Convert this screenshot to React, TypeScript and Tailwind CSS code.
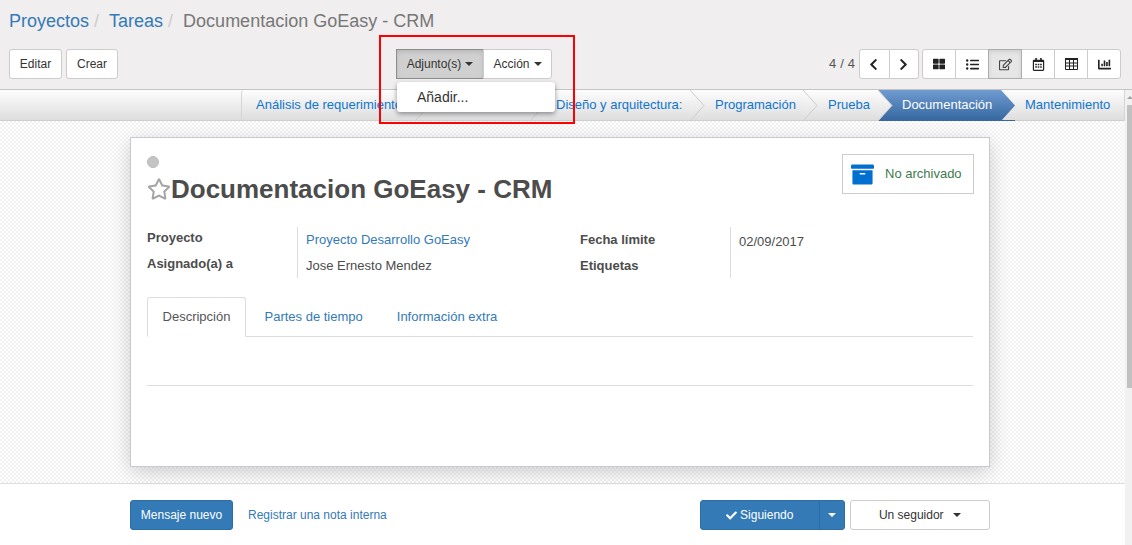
import { FaArchive, FaCheck, FaChevronLeft, FaChevronRight, FaRegCalendarAlt, FaChartBar, FaRegEdit, FaRegStar, FaThLarge, FaListUl } from "react-icons/fa";

function Caret({ className = "" }: { className?: string }) {
  return <span className={`inline-block w-0 h-0 border-x-4 border-x-transparent border-t-4 ${className}`} />;
}

function Arrow({ active }: { active?: boolean }) {
  const id = active ? "arrow-blue" : "arrow-grey";
  return (
    <svg className="absolute left-full top-0 z-10" width="15" height="31" viewBox="0 0 15 31">
      <defs>
        <linearGradient id={id} x1="0" y1="0" x2="0" y2="1">
          <stop offset="0" stopColor={active ? "#6f9bd0" : "#fdfdfd"} />
          <stop offset="1" stopColor={active ? "#35679f" : "#dedede"} />
        </linearGradient>
      </defs>
      <path d="M0 0 L14 15.5 L0 31 Z" fill={`url(#${id})`} />
      {!active && <path d="M0 0 L14 15.5 L0 31" fill="none" stroke="#cccccc" />}
      {active && <path d="M0 30.5 H14" stroke="#35679f" />}
    </svg>
  );
}

// fa-table from the older icon set: outlined grid, heavier top
function GridIcon() {
  return (
    <svg width="13" height="12" viewBox="0 0 13 12" fill="none" stroke="currentColor">
      <path d="M0.5 2 V11.5 H12.5 V2" />
      <path d="M0 1 H13" strokeWidth="2" />
      <path d="M0.5 5 H12.5 M0.5 8 H12.5 M4.5 2 V11.5 M8.5 2 V11.5" />
    </svg>
  );
}

const steps = [
  { label: "Análisis de requerimientos:", w: "w-[174px]", pl: "pl-[14px]" },
  { label: "", w: "w-[115px]", pl: "pl-[25px]" },
  { label: "Diseño y arquitectura:", w: "w-[160px]", pl: "pl-[26px]" },
  { label: "Programación", w: "w-[113px]", pl: "pl-[25px]" },
  { label: "Prueba", w: "w-[75px]", pl: "pl-[25px]" },
];

function ViewButton({ children, active, last }: { children: React.ReactNode; active?: boolean; last?: boolean }) {
  return (
    <div className={`w-[34px] h-[30px] flex items-center justify-center border -ml-px first:ml-0 first:rounded-l-[3px] ${last ? "rounded-r-[3px]" : ""} ${active ? "bg-[#e6e6e6] border-[#adadad] text-[#444] shadow-[inset_0_2px_4px_rgba(0,0,0,0.1)] z-[1]" : "bg-white border-[#cccccc] text-[#222]"}`}>
      {children}
    </div>
  );
}

export default function App() {
  return (
    <div className="relative w-[1132px] h-[545px] overflow-hidden bg-white text-[13px] text-[#4c4c4c] font-['Liberation_Sans',Arial,sans-serif]">
      {/* control panel */}
      <div className="h-[90px] bg-[#f0eeee] border-b border-[#c4c4c4]">
        <div className="h-[49px] pl-[9px] pt-[9px] text-[18px] leading-[25px] flex">
          <span className="text-[#337ab7]">Proyectos</span>
          <span className="text-[#ccc] pl-[5px] pr-[7px]">/</span>
          <span className="ml-[3px] text-[#337ab7]">Tareas</span>
          <span className="text-[#ccc] pl-[5px] pr-[7px]">/</span>
          <span className="ml-[3px] text-[#777]">Documentacion GoEasy - CRM</span>
        </div>
        <div className="flex items-center h-[30px] text-[12px] text-[#333]">
          <button className="ml-[9px] w-[53px] h-[30px] bg-white border border-[#ccc] rounded-[3px]">Editar</button>
          <button className="ml-[4px] w-[52px] h-[30px] bg-white border border-[#ccc] rounded-[3px]">Crear</button>
          <button className="ml-[278px] w-[88px] h-[30px] bg-[#d0d0d0] border border-[#8c8c8c] flex items-center justify-center gap-[4px] shadow-[inset_0_2px_4px_rgba(0,0,0,0.12)]">
            Adjunto(s) <Caret className="border-t-[#333]" />
          </button>
          <button className="w-[69px] h-[30px] -ml-px bg-white border border-[#ccc] rounded-r-[3px] flex items-center justify-center gap-[4px]">
            Acción <Caret className="border-t-[#333]" />
          </button>
          <span className="ml-[277px] w-[30px] text-[13px] tracking-[0.2px] text-[#555]">4 / 4</span>
          <div className="flex">
            <div className="w-[31px] h-[30px] flex items-center justify-center pr-[2px] bg-white border border-[#ccc] rounded-l-[3px] text-[#222]"><FaChevronLeft size={13} /></div>
            <div className="w-[30px] h-[30px] -ml-px flex items-center justify-center pr-[2px] bg-white border border-[#ccc] rounded-r-[3px] text-[#222]"><FaChevronRight size={13} /></div>
          </div>
          <div className="flex ml-[3px]">
            <ViewButton><FaThLarge size={12} /></ViewButton>
            <ViewButton><FaListUl size={13} /></ViewButton>
            <ViewButton active><FaRegEdit size={13} /></ViewButton>
            <ViewButton><FaRegCalendarAlt size={13} /></ViewButton>
            <ViewButton><GridIcon /></ViewButton>
            <ViewButton last><FaChartBar size={13} /></ViewButton>
          </div>
        </div>
      </div>

      <div className="flex h-[455px]">
        <div className="w-[1125px] flex flex-col">
          {/* status bar */}
          <div className="h-[31px] flex pl-[241px] bg-gradient-to-b from-[#fdfdfd] to-[#dedede] border-b border-[#cfcfcf] text-[#0f75ce]">
            {steps.map((s, i) => (
              <div key={i} className={`relative h-[31px] ${s.w} ${s.pl} leading-[29px] whitespace-nowrap ${i === 0 ? "border-l border-[#d5d5d5] rounded-l-[3px]" : ""}`}>
                {s.label}
                <Arrow />
              </div>
            ))}
            <div className="relative h-[31px] w-[123px] pl-[24px] leading-[29px] text-white bg-gradient-to-b from-[#6f9bd0] to-[#35679f]">
              Documentación
              <Arrow active />
            </div>
            <div className="h-[31px] w-[124px] pl-[24px] leading-[29px] border-r border-[#d5d5d5]">Mantenimiento</div>
          </div>

          {/* sheet area */}
          <div className="h-[363px] pt-[16px] pl-[130px] border-b border-[#dddddd] bg-[repeating-conic-gradient(#f2f2f2_0_25%,#ffffff_0_50%)] bg-[length:4px_4px]">
            <div className="w-[860px] h-[330px] bg-white border border-[#c8c8d3] shadow-[0_5px_20px_-1px_rgba(0,0,0,0.2)] pl-[16px] pr-[15px] pt-[16px]">
              <div className="flex justify-between">
                <div>
                  <div className="w-[12px] h-[12px] mt-[2px] rounded-full bg-[#c4c4c4] border border-[#bbb]" />
                  <div className="flex items-center mt-[6px] h-[30px]">
                    <FaRegStar size={24} className="text-[#a5a5a5]" />
                    <span className="text-[26px] leading-[30px] font-bold text-[#4c4c4c]">Documentacion GoEasy - CRM</span>
                  </div>
                </div>
                <div className="w-[132px] h-[40px] border border-[#cccccc] flex items-center pl-[8px] text-[#3e7a4e]">
                  <FaArchive size={23} className="text-[#0070d0]" />
                  <span className="ml-[11px]">No archivado</span>
                </div>
              </div>

              <div className="flex mt-[23px] h-[51px]">
                <div className="w-[150px] pt-[3px] font-bold leading-[15px]">
                  <div>Proyecto</div>
                  <div className="mt-[11px]">Asignado(a) a</div>
                </div>
                <div className="w-[283px] border-l border-[#dddddd] pl-[8px] pt-[5px] leading-[15px]">
                  <div className="text-[#337ab7]">Proyecto Desarrollo GoEasy</div>
                  <div className="mt-[11px]">Jose Ernesto Mendez</div>
                </div>
                <div className="w-[150px] pt-[5px] font-bold leading-[15px]">
                  <div>Fecha límite</div>
                  <div className="mt-[11px]">Etiquetas</div>
                </div>
                <div className="flex-1 border-l border-[#dddddd] pl-[8px] pt-[7px] leading-[15px]">02/09/2017</div>
              </div>

              <div className="flex mt-[19px] mr-px h-[40px] border-b border-[#dddddd]">
                <div className="w-[99px] h-[40px] bg-white border border-[#dddddd] border-b-white rounded-t-[3px] flex items-center justify-center text-[#555]">Descripción</div>
                <div className="ml-[18.5px] leading-[39px] text-[#337ab7]">Partes de tiempo</div>
                <div className="ml-[34px] leading-[39px] text-[#337ab7]">Información extra</div>
              </div>
              <div className="mt-[48px] mr-px border-t border-[#dddddd]" />
            </div>
          </div>

          {/* chatter */}
          <div className="flex-1 flex items-start pt-[16px] pl-[130px] text-[12px]">
            <button className="w-[103px] h-[30px] bg-[#337ab7] border border-[#2e6da4] rounded-[3px] text-white">Mensaje nuevo</button>
            <span className="ml-[15px] leading-[30px] text-[#337ab7]">Registrar una nota interna</span>
            <div className="ml-[313px] flex text-white">
              <button className="w-[120px] h-[30px] bg-[#337ab7] border border-[#2e6da4] rounded-l-[3px] flex items-center justify-center gap-[3px]">
                <FaCheck size={11} /> Siguiendo
              </button>
              <button className="w-[26px] h-[30px] -ml-px bg-[#337ab7] border border-[#2e6da4] rounded-r-[3px] flex items-center justify-center">
                <Caret className="border-t-white" />
              </button>
            </div>
            <button className="ml-[5px] w-[140px] h-[30px] bg-white border border-[#ccc] rounded-[3px] text-[#333] flex items-center justify-center gap-[9px]">
              Un seguidor <Caret className="border-t-[#333]" />
            </button>
          </div>
        </div>

        {/* scrollbar */}
        <div className="w-[7px] bg-[#f1f1f1] pt-[6px] pl-[2px] flex flex-col">
          <span className="w-0 h-0 ml-[0px] border-x-[3px] border-x-transparent border-b-[3px] border-b-[#a3a3a3]" />
          <div className="mt-[6px] h-[283px] bg-[#c1c1c1]" />
        </div>
      </div>

      {/* dropdown menu */}
      <div className="absolute left-[397px] top-[82px] w-[158px] h-[30px] z-20 bg-white rounded-[3px] shadow-[0_2px_5px_rgba(0,0,0,0.4)] pl-[20px] leading-[30px] text-[14px] text-[#333]">Añadir...</div>
      {/* red highlight */}
      <div className="absolute left-[379px] top-[35px] w-[196px] h-[89px] z-30 border-2 border-[#ff0000]" />
    </div>
  );
}
